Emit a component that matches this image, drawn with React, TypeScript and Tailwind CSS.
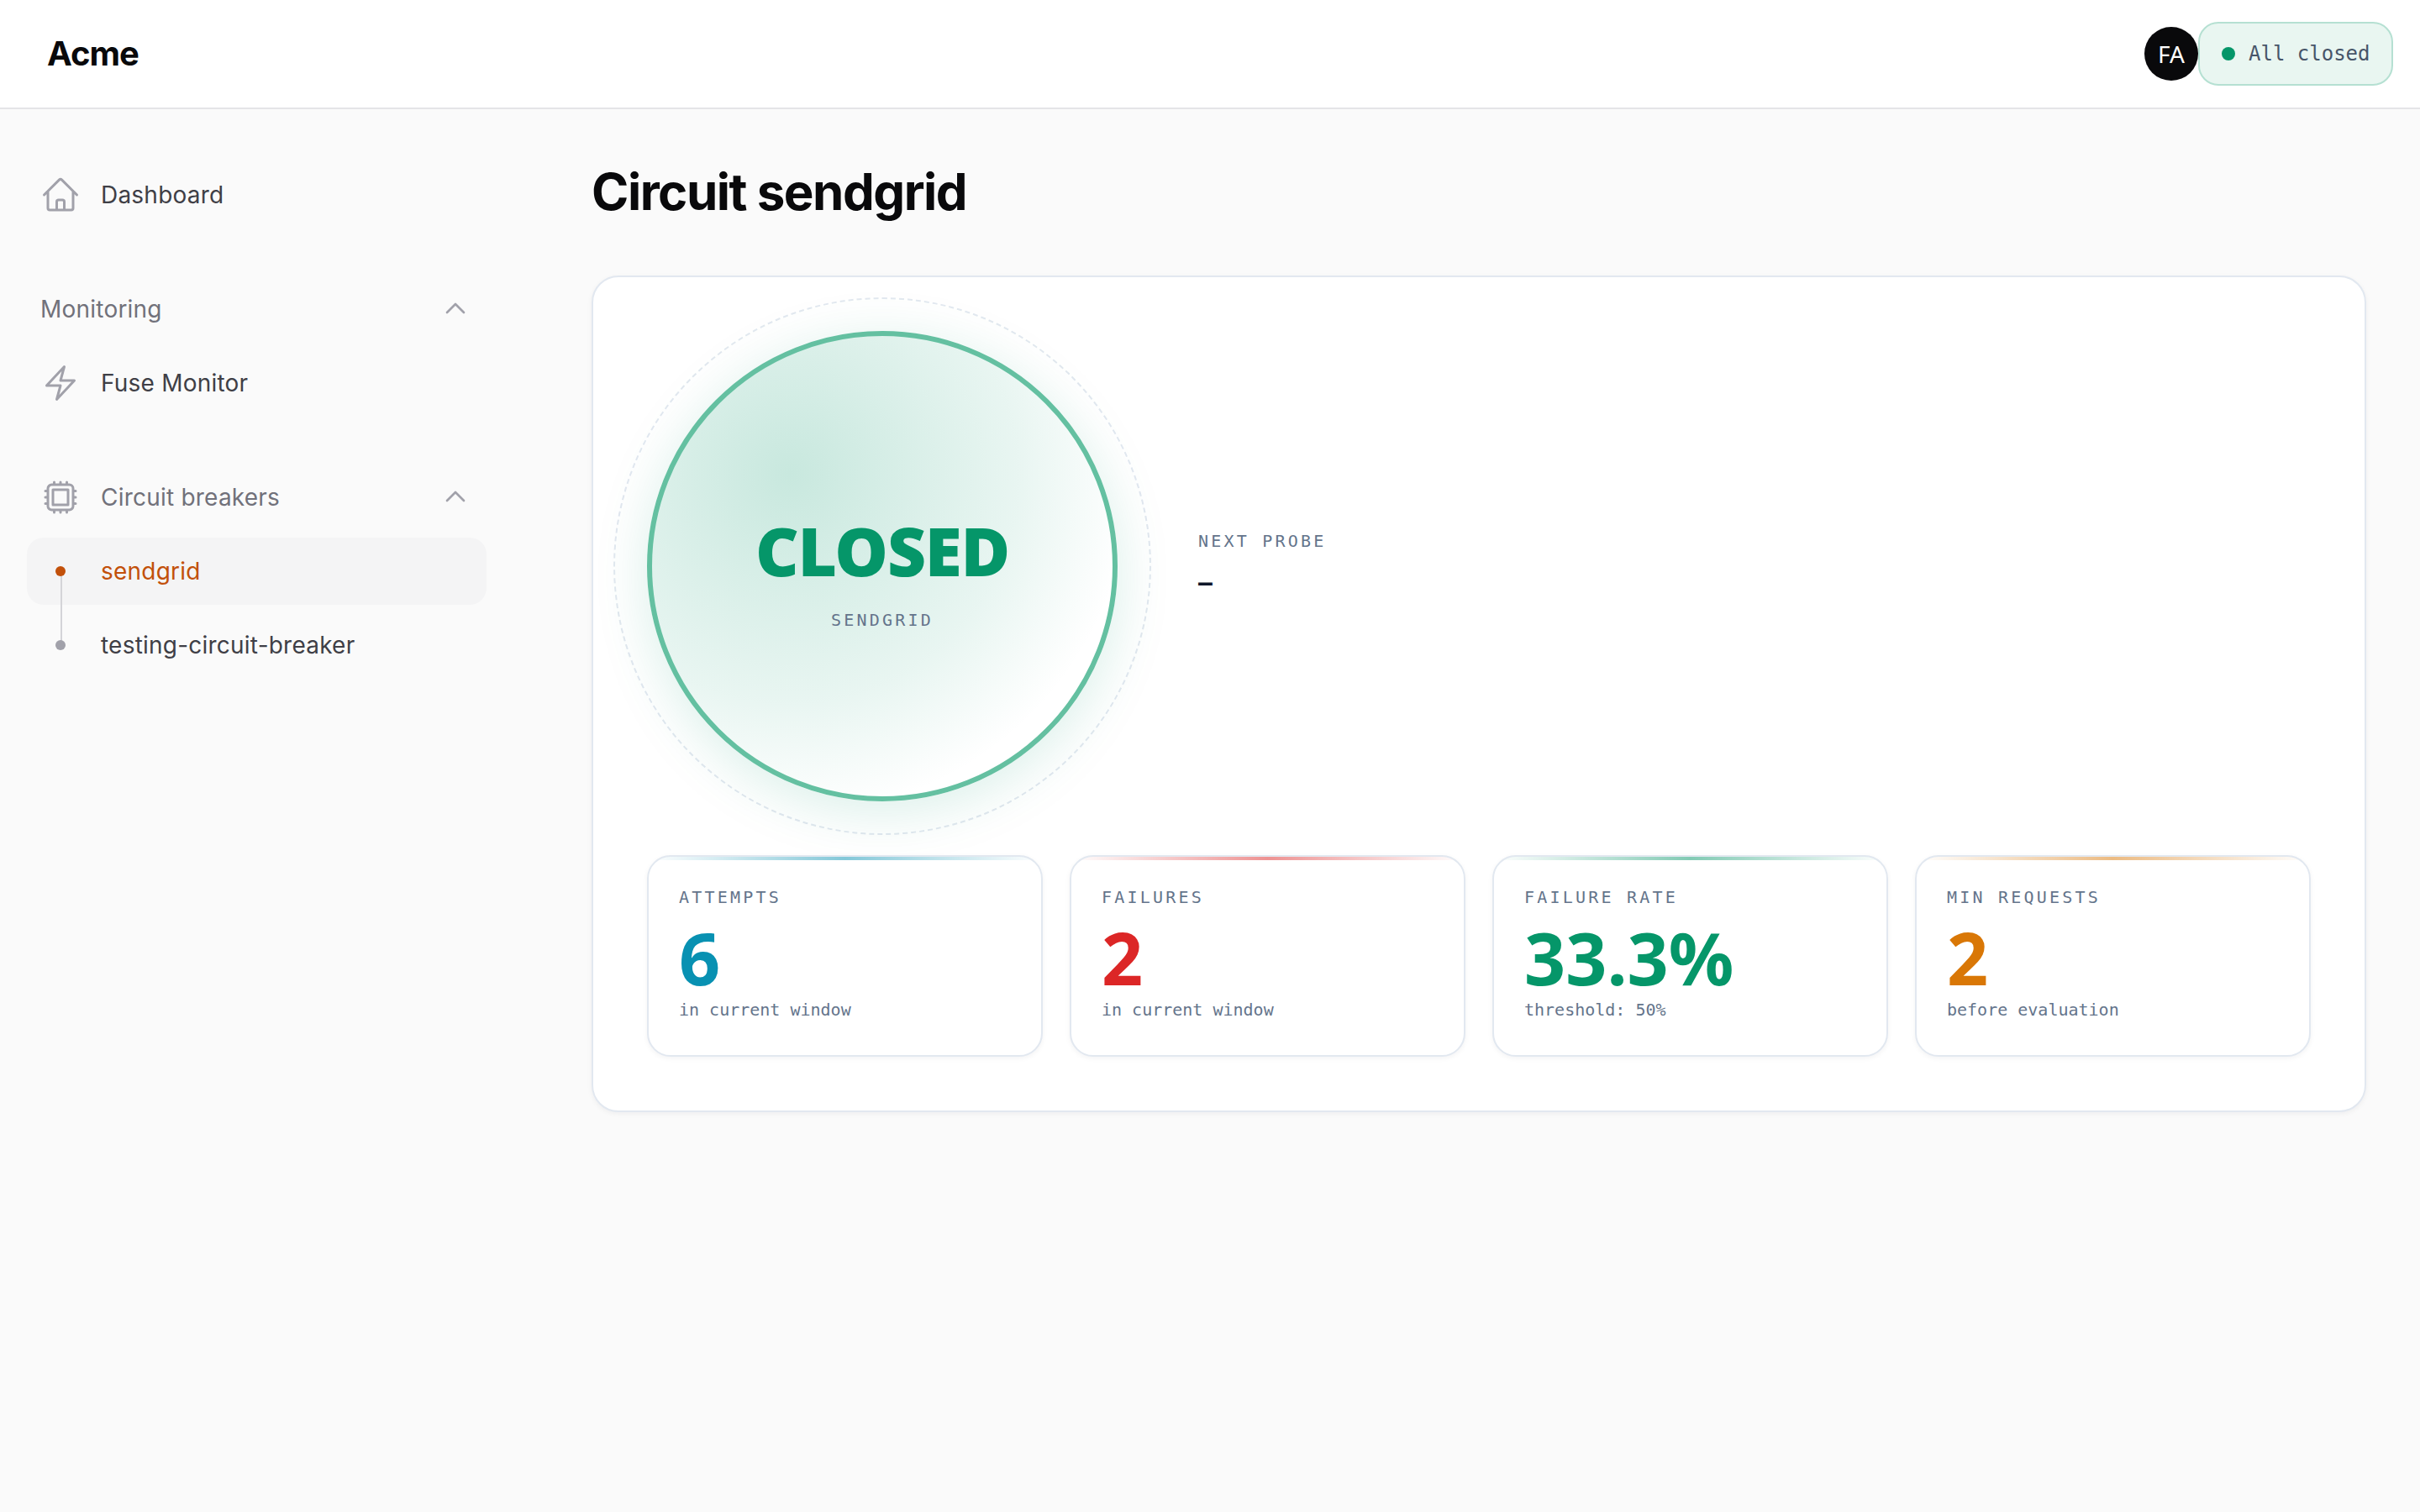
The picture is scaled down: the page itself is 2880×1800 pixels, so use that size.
import React from 'react';
import { HiOutlineBolt, HiOutlineChevronUp, HiOutlineCpuChip, HiOutlineHome } from 'react-icons/hi2';

const mono = "font-['DejaVu_Sans_Mono',monospace]";

const stats = [
  { label: 'ATTEMPTS', value: '6', sub: 'in current window', color: 'text-[#0891b2]', bar: 'via-[#0891b2]' },
  { label: 'FAILURES', value: '2', sub: 'in current window', color: 'text-[#dc2626]', bar: 'via-[#dc2626]' },
  { label: 'FAILURE RATE', value: '33.3%', sub: 'threshold: 50%', color: 'text-[#059669]', bar: 'via-[#059669]' },
  { label: 'MIN REQUESTS', value: '2', sub: 'before evaluation', color: 'text-[#d97706]', bar: 'via-[#d97706]' },
];

const Sidebar: React.FC = () => (
  <aside className="w-[640px] shrink-0 pl-8 pr-[61px] pt-[62px] text-[28px] tracking-[0.22px]">
    <a className="flex h-20 items-center gap-6 px-4 text-[#3f3f46]">
      <HiOutlineHome className="size-12 text-[#a1a1aa]" />
      Dashboard
    </a>
    <div className="mt-14 flex h-20 items-center justify-between pl-4 pr-[21px] text-[#71717a]">
      Monitoring
      <HiOutlineChevronUp className="-mt-0.5 size-8 stroke-2 text-[#a1a1aa]" />
    </div>
    <a className="mt-2 flex h-20 items-center gap-6 px-4 text-[#3f3f46]">
      <HiOutlineBolt className="size-12 text-[#a1a1aa]" />
      Fuse Monitor
    </a>
    <div className="mt-14 flex h-20 items-center gap-6 pl-4 pr-[21px] text-[#71717a]">
      <HiOutlineCpuChip className="size-12 text-[#a1a1aa]" />
      <span className="flex-1">Circuit breakers</span>
      <HiOutlineChevronUp className="-mt-0.5 size-8 stroke-2 text-[#a1a1aa]" />
    </div>
    <div className="relative mt-2 flex flex-col gap-2">
      <div className="absolute left-[40px] top-10 h-[88px] w-0.5 bg-[#d4d4d8]" />
      <a className="flex h-20 items-center gap-6 rounded-[20px] bg-[#f4f4f5] px-4 text-[#c2500a]">
        <span className="flex w-12 justify-center">
          <span className="relative size-3 rounded-full bg-[#c2500a]" />
        </span>
        sendgrid
      </a>
      <a className="flex h-20 items-center gap-6 px-4 text-[#3f3f46]">
        <span className="flex w-12 justify-center">
          <span className="relative size-3 rounded-full bg-[#a1a1aa]" />
        </span>
        testing-circuit-breaker
      </a>
    </div>
  </aside>
);

const StatCard: React.FC<(typeof stats)[number]> = ({ label, value, sub, color, bar }) => (
  <div className="relative h-[240px] overflow-hidden rounded-[28px] border-2 border-[#e2e8f0] bg-white px-9 pt-[34px] shadow-[0_2px_6px_rgba(15,23,42,0.05)]">
    <div className={`absolute inset-x-0 top-0 h-1 bg-gradient-to-r from-transparent to-transparent opacity-50 ${bar}`} />
    <div className={`${mono} text-[20px] leading-[28px] tracking-[3.2px] text-[#64748b]`}>{label}</div>
    <div className={`mt-2.5 font-['Noto_Sans',sans-serif] text-[86px] font-bold leading-[96px] ${color}`}>{value}</div>
    <div className={`${mono} text-[20px] leading-[28px] text-[#64748b]`}>{sub}</div>
  </div>
);

const App: React.FC = () => {
  return (
    <div className="flex min-h-[1800px] flex-col bg-[#fafafa] font-['Inter',sans-serif]">
      <header className="flex h-[130px] items-center justify-between border-b-2 border-[#e4e4e7] bg-white pl-14 pr-8">
        <div className="text-[40px] font-bold tracking-[-1px] text-[#09090b]">Acme</div>
        <div className="flex items-center">
          <div className="flex size-16 items-center justify-center rounded-full bg-[#09090b] font-['Noto_Sans',sans-serif] text-[28px] text-white">
            FA
          </div>
          <div className="flex h-[76px] w-[232px] items-center gap-4 rounded-[24px] border-2 border-[#b5e0d2] bg-[#e9f6f1] pl-[26px]">
            <span className="size-4 shrink-0 rounded-full bg-[#059669]" />
            <span className={`${mono} whitespace-nowrap text-[24px] text-[#475569]`}>All closed</span>
          </div>
        </div>
      </header>
      <div className="flex flex-1">
        <Sidebar />
        <main className="flex-1 pr-16 pt-[62px] pl-16">
          <h1 className="text-[60px] font-bold leading-[72px] tracking-[-1.5px] text-[#09090b]">Circuit sendgrid</h1>
          <section className="mt-[64px] rounded-[32px] border-2 border-[#e2e8f0] bg-white p-16 shadow-[0_2px_6px_rgba(15,23,42,0.05)]">
            <div className="flex items-center gap-24">
              <div className="relative size-[560px] shrink-0">
                <div className="absolute -inset-10 rounded-full border-2 border-dashed border-[#e2e8f0]" />
                <div className="relative flex size-full flex-col items-center justify-center rounded-full border-[6px] border-[#64c0a1] bg-[radial-gradient(circle_at_30%_30%,rgba(5,150,105,0.22),rgba(5,150,105,0.09)_50%,transparent_75%)] pt-3 shadow-[0_12px_64px_rgba(5,150,105,0.15)]">
                  <div className="font-['Noto_Sans',sans-serif] text-[80px] font-black leading-[96px] tracking-[-1.2px] text-[#059669]">
                    CLOSED
                  </div>
                  <div className={`${mono} mt-5 text-[20px] tracking-[3.2px] text-[#64748b]`}>SENDGRID</div>
                </div>
              </div>
              <div className="-mt-1.5">
                <div className={`${mono} text-[20px] leading-[28px] tracking-[3.2px] text-[#64748b]`}>NEXT PROBE</div>
                <div className={`${mono} mt-[18px] text-[28px] font-bold leading-[36px] text-[#0f172a]`}>–</div>
              </div>
            </div>
            <div className="mt-16 grid grid-cols-4 gap-8">
              {stats.map((s) => (
                <StatCard key={s.label} {...s} />
              ))}
            </div>
          </section>
        </main>
      </div>
    </div>
  );
};

export default App;
